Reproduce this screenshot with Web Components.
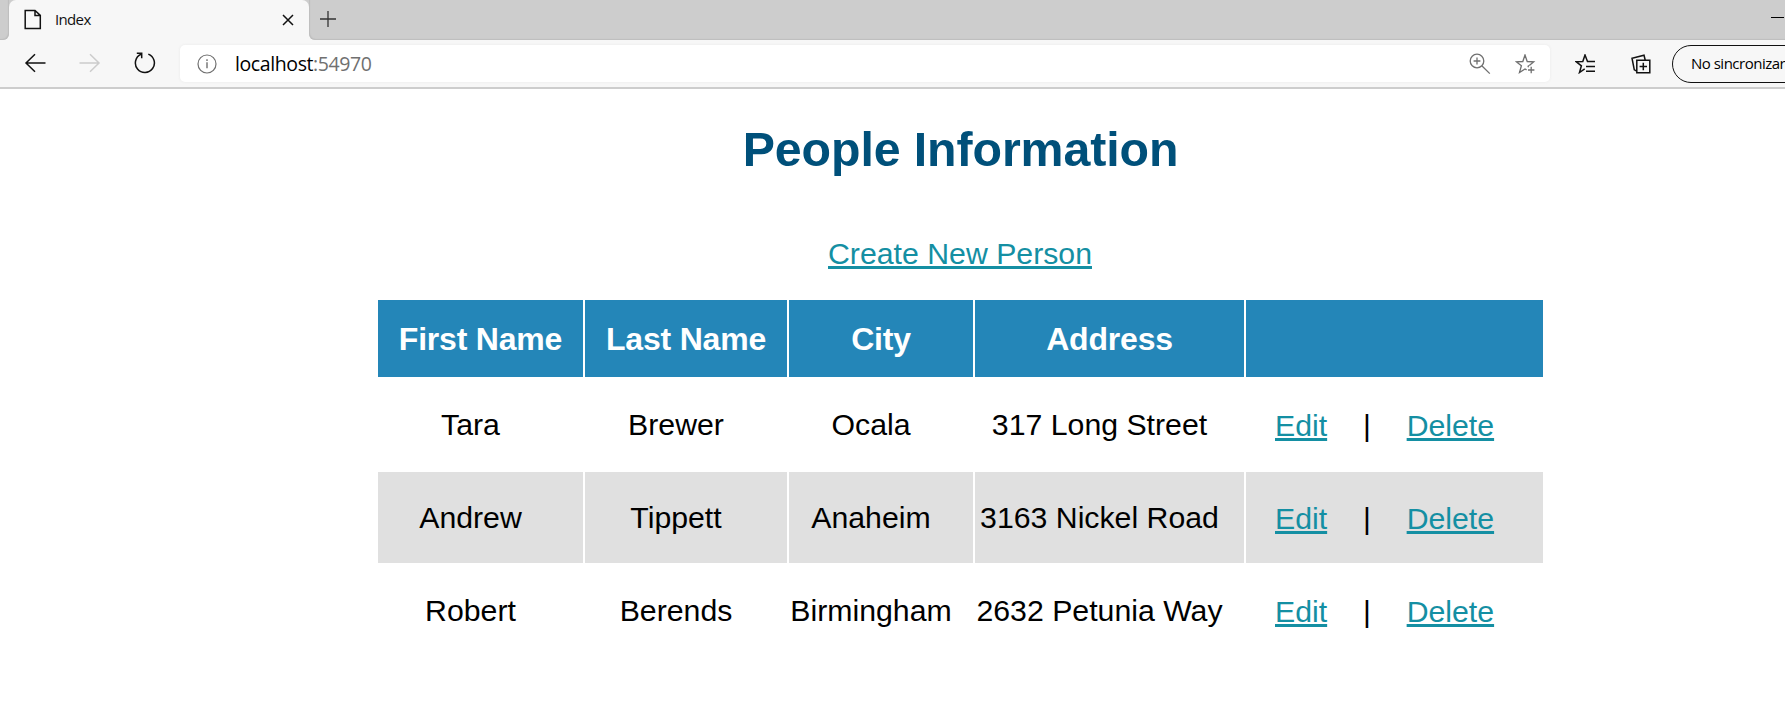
<!DOCTYPE html>
<html lang="en">
<head>
<meta charset="utf-8">
<title>Index</title>
<style>
html,body{margin:0;height:100%;background:#fff;overflow:hidden}
body{font-family:"Liberation Sans",Arial,sans-serif}
</style>
</head>
<body>
<browser-window>
  <tab-strip slot="chrome"><browser-tab>Index</browser-tab></tab-strip>
  <browser-toolbar slot="chrome" host="localhost" port=":54970"></browser-toolbar>
  <people-page></people-page>
</browser-window>
<script>
const define = (name, html, setup) => customElements.define(name, class extends HTMLElement {
  constructor() {
    super();
    const t = document.createElement('template');
    t.innerHTML = html;
    this.attachShadow({mode: 'open'}).append(t.content.cloneNode(true));
  }
  connectedCallback() { if (setup) setup(this, this.shadowRoot); }
});

const icons = {
  page: [18, 22, '<path d="M1.2 1.4h9.8l5.3 5v13.2H1.2z M11 1.4v5h5.3" stroke-width="1.5"/>'],
  close: [12, 12, '<path d="M1 1l10 10M11 1L1 11" stroke-width="1.5"/>'],
  plus: [16, 16, '<path d="M8 0v16M0 8h16" stroke-width="1.3"/>'],
  minimise: [13, 2, '<path d="M0 .5h13" stroke-width="1"/>'],
  back: [22, 20, '<path d="M21.5 10H2M11 1.2L2 10l9 8.8" stroke-width="1.5"/>'],
  forward: [22, 20, '<path d="M.5 10H20M11 1.2L20 10l-9 8.8" stroke-width="1.5"/>'],
  reload: [22, 22, '<path d="M14.3 2.1A9.5 9.5 0 1 1 7 2.3M2.8 1.3h4.9v5" stroke-width="1.5"/>'],
  info: [20, 20, '<circle cx="10" cy="10" r="9" stroke-width="1.2"/><path d="M10 8.3v6M10 5.2v1.7" stroke-width="1.4"/>'],
  zoom: [22, 22, '<circle cx="8" cy="8" r="6.8" stroke-width="1.3"/><path d="M12.8 12.8l8 7.8M8 4.6v6.8M4.6 8h6.8" stroke-width="1.3"/>'],
  star: [22, 20, '<path d="M14.3 11.5l4.4-3.7-6.5-.3L10 1 7.8 7.5l-6.5.3 5.1 4-1.9 6.7L10 14.9l1.6 1M13.6 11.3l-.6 2M16.2 12.8v6.4M13 16h6.4" stroke-width="1.3"/>'],
  favourites: [22, 20, '<path d="M20 7.5h-7.5L10 1 7.8 7.5l-6.5.3 5.1 4-1.9 6.7 5.2-3.6M11 12.4h9M11 17.2h9" stroke-width="1.5"/>'],
  collections: [20, 20, '<path d="M5.8 6.2h13v12.5h-13z M12.3 8.8v7.4M8.6 12.5H16M5.8 17.2L3.3 15.8 1 4.2 13 1.2l1.2 4.8" stroke-width="1.5"/>']
};
define('ui-icon', `<style>
:host{display:block;flex:none}
svg{display:block;fill:none;stroke:currentColor}
</style><span></span>`, (el, root) => {
  const [w, h, body] = icons[el.getAttribute('name')];
  root.querySelector('span').innerHTML = `<svg width="${w}" height="${h}" viewBox="0 0 ${w} ${h}">${body}</svg>`;
});

define('browser-window', `<style>
:host{display:flex;flex-direction:column;width:100vw;height:100vh;overflow:hidden}
</style><slot name="chrome"></slot><slot></slot>`);

define('tab-strip', `<style>
:host{display:flex;flex:none;height:40px;background:#cdcdcd;color:#333;box-sizing:border-box;overflow:hidden}
.shade{width:9px;background:#f7f7f7}
.shade i{display:block;height:40px;background:#cdcdcd;border-bottom-right-radius:6px;box-shadow:inset -1px -1px 1px #bebebe}
.rest{flex:1;background:#f7f7f7}
.fill{display:flex;justify-content:space-between;height:40px;background:#cdcdcd;border-bottom-left-radius:6px;box-shadow:inset 1px -1px 1px #bebebe}
.add{margin:11px 0 0 11px}
.min{margin:17px 1px 0 0;color:#000}
</style>
<div class="shade"><i></i></div><slot></slot>
<div class="rest"><div class="fill"><ui-icon class="add" name="plus"></ui-icon><ui-icon class="min" name="minimise"></ui-icon></div></div>`);

define('browser-tab', `<style>
:host{display:flex;box-sizing:border-box;width:300px;height:40px;padding:0 15px 0 15px;align-items:center;background:#cdcdcd;position:relative;isolation:isolate;color:#111;font:15px/20px "Open Sans","Noto Sans",sans-serif}
.bg{position:absolute;inset:0;background:#f7f7f7;border-radius:7px 7px 0 0;z-index:-1}
span{margin:0 0 2px 13px;flex:1;letter-spacing:-.65px}
</style><div class="bg"></div><ui-icon name="page"></ui-icon><span><slot></slot></span><ui-icon name="close"></ui-icon>`);

define('browser-toolbar', `<style>
:host{display:flex;flex:none;box-sizing:border-box;height:49px;padding-top:5px;background:#f7f7f7;border-bottom:2px solid #cdcdcd;color:#111;font-family:"Open Sans","Noto Sans",sans-serif;overflow:hidden}
nav{display:flex;flex:none;width:180px;height:36px;align-items:center;box-sizing:border-box;padding-left:24px;gap:33px}
nav .off{color:#ccc}
.address{display:flex;flex:none;align-items:center;box-sizing:border-box;width:1370px;height:37px;padding:0 13px 0 17px;background:#fff;border-radius:5px;box-shadow:0 0 3px #e9e9e9;color:#707070}
.url{flex:1;margin-left:18px;font-size:19.5px;line-height:30px;letter-spacing:-.4px}
.url b{font-weight:400;color:#000}
.star{margin-left:24px}
.tools{display:flex;flex:none;height:37px;align-items:center;gap:34px;padding-left:25px}
.profile{box-sizing:border-box;flex:none;width:180px;height:38px;border:1.5px solid #111;border-radius:19px;margin-left:21px;padding-left:18px;font-size:15px;line-height:35px;letter-spacing:-.5px;white-space:nowrap;color:#000}
</style>
<nav><ui-icon name="back"></ui-icon><ui-icon class="off" name="forward"></ui-icon><ui-icon name="reload"></ui-icon></nav>
<div class="address"><ui-icon name="info"></ui-icon><div class="url"><b></b><span></span></div><ui-icon name="zoom"></ui-icon><ui-icon class="star" name="star"></ui-icon></div>
<div class="tools"><ui-icon name="favourites"></ui-icon><ui-icon name="collections"></ui-icon></div>
<div class="profile">No sincronizar</div>`, (el, root) => {
  root.querySelector('b').textContent = el.getAttribute('host');
  root.querySelector('.url span').textContent = el.getAttribute('port');
});

define('text-link', `<style>
:host{display:inline-block;color:#148fa3}
a{color:inherit;text-decoration:underline 3px;text-underline-offset:2px;text-decoration-skip-ink:none;cursor:pointer}
</style><a><slot></slot></a>`);

define('people-page', `<style>
:host{display:flex;flex-direction:column;align-items:center;width:1921px;flex:none}
h1{margin:32px 0 0;font-size:48.3px;line-height:56px;letter-spacing:-.1px;color:#00507a;font-weight:700}
text-link{margin:60px 1px 0 0;font-size:30.25px;line-height:34px}
people-table{margin-top:29px}
</style>
<h1>People Information</h1>
<text-link>Create New Person</text-link>
<people-table></people-table>`);

define('people-table', `<style>
:host{display:grid;grid-template-columns:205px 202px 184px 269px 297px;grid-template-rows:77px 91px 91px 91px;gap:2px;font-size:30.25px;color:#000}
.th{display:flex;justify-content:center;align-items:center;background:#2486b8;color:#fff;font-size:32px;font-weight:700;line-height:36px;letter-spacing:-.2px}
.td{display:flex;justify-content:center;align-items:center;box-sizing:border-box;padding:0 20px 0 0;line-height:34px;white-space:nowrap}
.alt{background:#e0e0e0}
.actions{justify-content:flex-start;padding:2px 0 0 29px}
.actions span{width:79.5px;text-align:center}
</style>`, (el, root) => {
  const add = (cls, html) => {
    const d = document.createElement('div');
    d.className = cls; d.innerHTML = html; root.append(d);
  };
  ['First Name', 'Last Name', 'City', 'Address', ''].forEach(t => add('th', t));
  [['Tara', 'Brewer', 'Ocala', '317 Long Street'],
   ['Andrew', 'Tippett', 'Anaheim', '3163 Nickel Road'],
   ['Robert', 'Berends', 'Birmingham', '2632 Petunia Way']].forEach((r, i) => {
    const alt = i % 2 ? ' alt' : '';
    r.forEach(t => add('td' + alt, t));
    add('td actions' + alt, '<text-link>Edit</text-link><span>|</span><text-link>Delete</text-link>');
  });
});
</script>
</body>
</html>
